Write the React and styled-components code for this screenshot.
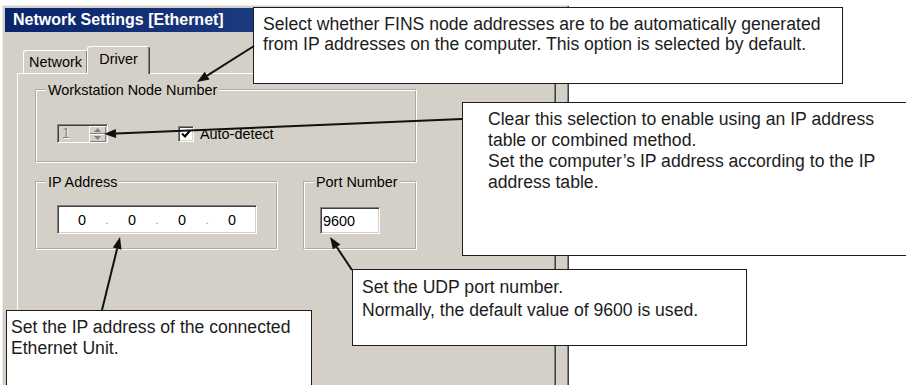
import React from 'react';
import styled, { createGlobalStyle } from 'styled-components';

const GlobalStyle = createGlobalStyle`
  html, body {
    margin: 0;
    padding: 0;
    background: #ffffff;
  }
`;

const Page = styled.div`
  position: relative;
  width: 906px;
  height: 385px;
  overflow: hidden;
  box-sizing: border-box;
  padding: 5px 0 0 2px;
  background: #ffffff;
  font-family: "Liberation Sans", Arial, sans-serif;
`;

/* dialog window */

const Window = styled.div`
  width: 567px;
  height: 400px;
  box-sizing: border-box;
  padding: 3px;
  display: flex;
  flex-direction: column;
  background: #d4d0c8;
  box-shadow: inset 1px 1px 0 #ecebe6, inset -1px -1px 0 #404040, inset -2px -2px 0 #808080;
`;

const TitleBar = styled.div`
  height: 24px;
  flex: none;
  display: flex;
  align-items: center;
  padding-left: 8px;
  background: linear-gradient(90deg, #0a246a 0%, #1b3a80 45%, #a6caf0 100%);
  color: #ffffff;
  font-weight: bold;
  font-size: 16px;
  white-space: nowrap;
`;

const Body = styled.div`
  flex: 1;
  display: flex;
  flex-direction: column;
  padding: 14px 10px 0 12px;
`;

const TabRow = styled.div`
  height: 27px;
  flex: none;
  display: flex;
  align-items: flex-end;
  padding-left: 6px;
`;

const Tab = styled.div`
  position: relative;
  z-index: ${p => (p.$active ? 1 : 0)};
  width: ${p => p.$w}px;
  height: ${p => (p.$active ? 28 : 23)}px;
  margin-bottom: ${p => (p.$active ? -1 : 0)}px;
  margin-left: ${p => (p.$active ? -1 : 0)}px;
  padding-bottom: ${p => (p.$active ? 3 : 0)}px;
  box-sizing: border-box;
  display: flex;
  align-items: center;
  justify-content: center;
  background: #d4d0c8;
  border-top: 1px solid #ffffff;
  border-left: 1px solid #ffffff;
  border-right: 1px solid #404040;
  border-radius: 3px 3px 0 0;
  box-shadow: inset -1px 0 0 #808080;
  font-size: 14.4px;
  color: #000000;
`;

const Panel = styled.div`
  flex: 1;
  display: flex;
  flex-direction: column;
  align-items: flex-start;
  gap: 11px;
  padding: 8px 0 0 17px;
  border-top: 1px solid #ffffff;
  border-left: 1px solid #ffffff;
  border-right: 1px solid #404040;
  box-shadow: inset -1px 0 0 #808080;
`;

const GroupRow = styled.div`
  display: flex;
  gap: 25px;
`;

const Group = styled.fieldset`
  margin: 0;
  padding: 0;
  width: ${p => p.$w}px;
  box-sizing: border-box;
  border: 2px groove #ffffff;
  min-inline-size: 0;
`;

const Legend = styled.legend`
  margin-left: 9px;
  padding: 0 2px;
  font-size: 14.4px;
  line-height: 16px;
  color: #000000;
`;

const GroupBody = styled.div`
  display: flex;
  align-items: center;
  padding: ${p => p.$pad};
`;

/* controls */

const Spinner = styled.div`
  width: 51px;
  height: 19px;
  box-sizing: border-box;
  display: flex;
  border: 1px solid;
  border-color: #808080 #ffffff #ffffff #808080;
  box-shadow: inset 1px 1px 0 #404040;
  background: #d4d0c8;
`;

const SpinValue = styled.span`
  flex: 1;
  padding: 1px 0 0 4px;
  font-size: 14.4px;
  line-height: 15px;
  color: #808080;
  text-shadow: 1px 1px 0 #ffffff;
`;

const SpinButtons = styled.div`
  width: 17px;
  display: flex;
  flex-direction: column;
  padding: 1px 1px 0 0;
`;

const SpinButton = styled.div`
  flex: 1;
  display: flex;
  align-items: center;
  justify-content: center;
  background: #d4d0c8;
  box-shadow: inset 1px 1px 0 #ffffff, inset -1px -1px 0 #808080;
`;

const CheckBox = styled.div`
  width: 16px;
  height: 16px;
  margin-left: 70px;
  box-sizing: border-box;
  display: flex;
  align-items: center;
  justify-content: center;
  border: 1px solid;
  border-color: #808080 #ffffff #ffffff #808080;
  box-shadow: inset 1px 1px 0 #404040, inset -1px -1px 0 #d4d0c8;
  background: #ffffff;
`;

const CheckLabel = styled.span`
  margin-left: 6px;
  font-size: 14.4px;
  color: #000000;
`;

const Edit = styled.div`
  width: ${p => p.$w}px;
  height: ${p => p.$h}px;
  box-sizing: border-box;
  display: flex;
  align-items: center;
  padding: ${p => (p.$ip ? '0 0 0 2px' : '0 2px')};
  border: 1px solid;
  border-color: #808080 #ffffff #ffffff #808080;
  box-shadow: inset 1px 1px 0 #404040, inset -1px -1px 0 #d4d0c8;
  background: #ffffff;
  font-size: 14.4px;
  color: #000000;
`;

const Octet = styled.span`
  width: 44px;
  text-align: center;
`;

const IpDot = styled.span`
  width: 6px;
  text-align: center;
  color: #a0a0a0;
  font-size: 12px;
`;

/* annotation boxes */

const Callout = styled.div`
  position: absolute;
  z-index: 2;
  left: ${p => p.$x}px;
  top: ${p => p.$y}px;
  width: ${p => p.$w}px;
  height: ${p => p.$h}px;
  box-sizing: border-box;
  padding: ${p => p.$pad};
  border: 1.5px solid #1e1e1e;
  background: #ffffff;
  font-size: 17.6px;
  line-height: ${p => p.$lh || 21}px;
  color: #1c1c1c;
  white-space: nowrap;
`;

const Arrows = styled.svg`
  position: absolute;
  z-index: 3;
  left: 0;
  top: 0;
  width: 906px;
  height: 385px;
  pointer-events: none;
`;

function Arrow({ from, to }) {
  const [x1, y1] = from;
  const [x2, y2] = to;
  const len = Math.hypot(x2 - x1, y2 - y1);
  const ux = (x2 - x1) / len;
  const uy = (y2 - y1) / len;
  const bx = x2 - ux * 12;
  const by = y2 - uy * 12;
  const hw = 4.5;
  const head = `${x2},${y2} ${bx - uy * hw},${by + ux * hw} ${bx + uy * hw},${by - ux * hw}`;
  return (
    <g>
      <line x1={x1} y1={y1} x2={bx} y2={by} stroke="#111" strokeWidth="2" />
      <polygon points={head} fill="#111" />
    </g>
  );
}

const SpinArrow = ({ up }) => (
  <svg width="7" height="4" viewBox="0 0 7 4">
    <polygon points={up ? '3.5,0 7,4 0,4' : '0,0 7,0 3.5,4'} fill="#808080" />
  </svg>
);

const IpField = ({ parts }) => (
  <Edit $w={200} $h={29} $ip>
    {parts.map((p, i) => (
      <React.Fragment key={i}>
        {i > 0 && <IpDot>.</IpDot>}
        <Octet>{p}</Octet>
      </React.Fragment>
    ))}
  </Edit>
);

export default function App() {
  return (
    <Page>
      <GlobalStyle />
      <Window>
        <TitleBar>Network Settings [Ethernet]</TitleBar>
        <Body>
          <TabRow>
            <Tab $w={65}>Network</Tab>
            <Tab $w={63} $active>Driver</Tab>
          </TabRow>
          <Panel>
            <Group $w={382}>
              <Legend>Workstation Node Number</Legend>
              <GroupBody $pad="26px 0 18px 20px">
                <Spinner>
                  <SpinValue>1</SpinValue>
                  <SpinButtons>
                    <SpinButton><SpinArrow up /></SpinButton>
                    <SpinButton><SpinArrow /></SpinButton>
                  </SpinButtons>
                </Spinner>
                <CheckBox>
                  <svg width="10" height="10" viewBox="0 0 10 10">
                    <polyline points="1,4.5 4,7.5 9,1.5" fill="none" stroke="#000" strokeWidth="2" />
                  </svg>
                </CheckBox>
                <CheckLabel>Auto-detect</CheckLabel>
              </GroupBody>
            </Group>
            <GroupRow>
              <Group $w={243}>
                <Legend>IP Address</Legend>
                <GroupBody $pad="15px 0 14px 20px">
                  <IpField parts={['0', '0', '0', '0']} />
                </GroupBody>
              </Group>
              <Group $w={114}>
                <Legend>Port Number</Legend>
                <GroupBody $pad="17px 0 0 15px">
                  <Edit $w={60} $h={27}>9600</Edit>
                </GroupBody>
              </Group>
            </GroupRow>
          </Panel>
        </Body>
      </Window>

      <Callout $x={253} $y={7} $w={590} $h={77} $pad="6px 0 0 9px" $lh={20}>
        Select whether FINS node addresses are to be automatically generated
        <br />
        from IP addresses on the computer. This option is selected by default.
      </Callout>
      <Callout $x={462} $y={102} $w={460} $h={154} $pad="6px 0 0 25px">
        Clear this selection to enable using an IP address
        <br />
        table or combined method.
        <br />
        Set the computer’s IP address according to the IP
        <br />
        address table.
      </Callout>
      <Callout $x={352} $y={269} $w={395} $h={77} $pad="6px 0 0 9px" $lh={23}>
        Set the UDP port number.
        <br />
        Normally, the default value of 9600 is used.
      </Callout>
      <Callout $x={6} $y={310} $w={306} $h={90} $pad="6px 0 0 4px">
        Set the IP address of the connected
        <br />
        Ethernet Unit.
      </Callout>

      <Arrows viewBox="0 0 906 385">
        <Arrow from={[254, 46]} to={[197, 82]} />
        <Arrow from={[462, 119]} to={[104, 134]} />
        <Arrow from={[102, 310]} to={[120, 237]} />
        <Arrow from={[352, 270]} to={[330, 237]} />
      </Arrows>
    </Page>
  );
}
